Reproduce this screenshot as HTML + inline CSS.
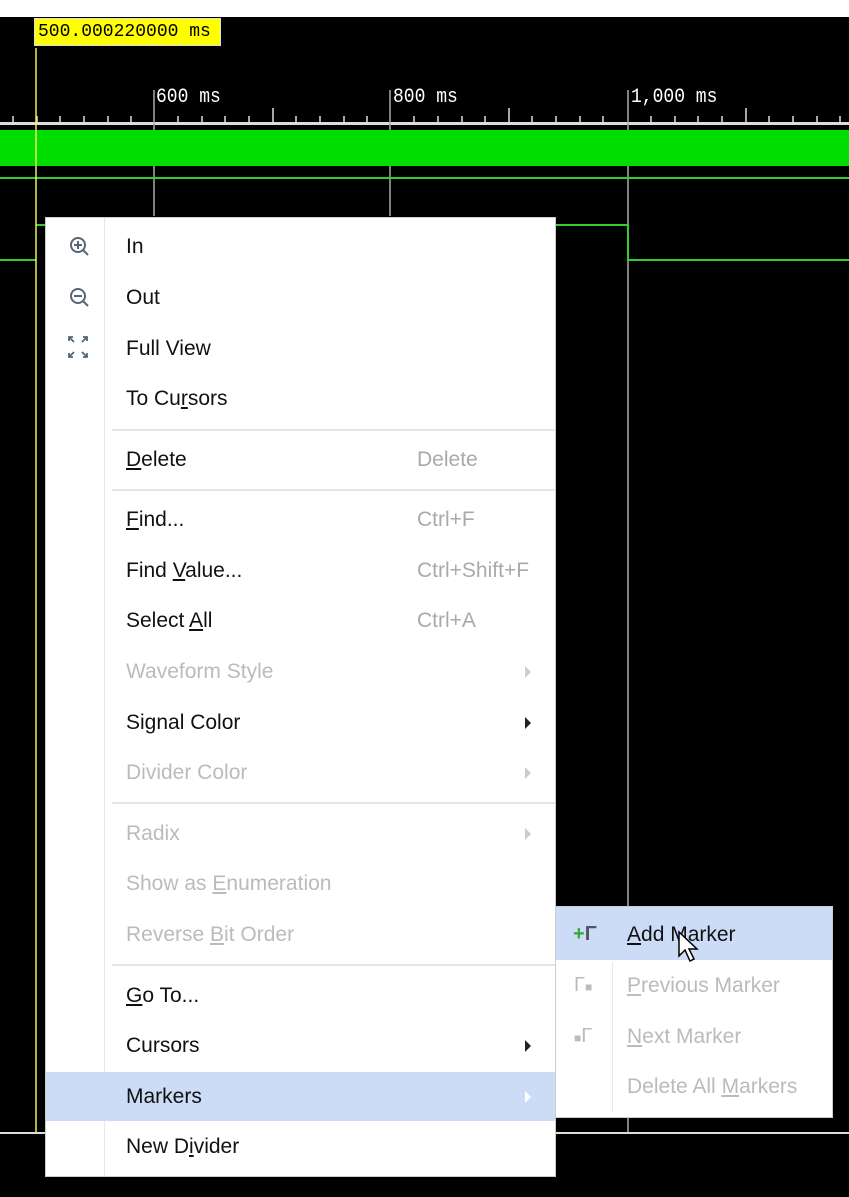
<!DOCTYPE html>
<html><head><style>
body{margin:0;width:849px;height:1197px;background:#000;position:relative;overflow:hidden;font-family:"Liberation Sans",Arial,sans-serif}
.a{position:absolute}
.it{position:absolute;left:126px;font-size:21px;color:#111;line-height:24px;white-space:nowrap}
.dis{color:#bbb}
.sc{position:absolute;left:417px;font-size:21px;color:#aaa;line-height:24px}
.arr{position:absolute;left:525px;width:0;height:0;border-left:6px solid #222;border-top:6px solid transparent;border-bottom:6px solid transparent}
.arr.d{border-left-color:#ccc}
.sep{position:absolute;left:112px;width:443px;height:2px;background:#e6e6e6}
u{text-decoration:underline;text-underline-offset:2px}
.mono{font-family:"Liberation Mono",monospace;color:#fff;font-size:18px;transform:scaleY(1.15);transform-origin:left top}
</style></head><body>
<div class="a" style="left:0;top:0;width:849px;height:17px;background:#fff"></div>
<div class="a" style="left:34px;top:18px;width:187px;height:28px;background:#ffff00;border:1px solid #ddd;box-sizing:border-box;font-family:'Liberation Mono',monospace;font-size:18px;line-height:26px;padding-left:3px;color:#000">500.000220000 ms</div>
<div class="a mono" style="left:156px;top:86px">600 ms</div>
<div class="a mono" style="left:393px;top:86px">800 ms</div>
<div class="a mono" style="left:631px;top:86px">1,000 ms</div>
<div class="a" style="left:0;top:122px;width:849px;height:3px;background:#ddd"></div>
<svg class="a" style="left:0;top:0" width="849" height="1197">
<g stroke="#ddd" stroke-width="1.5">
<path d="M13 116V123M37 116V123M60 116V123M84 116V123M108 116V123M131 116V123M178 116V123M202 116V123M225 116V123M249 116V123M273 108V123M296 116V123M320 116V123M344 116V123M367 116V123M414 116V123M438 116V123M462 116V123M485 116V123M509 108V123M532 116V123M556 116V123M580 116V123M603 116V123M651 116V123M675 116V123M698 116V123M722 116V123M746 108V123M769 116V123M793 116V123M817 116V123M840 116V123"/>
</g>
<g stroke="#aaa" stroke-width="1.5">
<path d="M154 90V216M390 90V216M628 90V1134"/>
</g>
<rect x="0" y="130" width="849" height="36" fill="#00dd00"/>
<path d="M0 178H849" stroke="#33cc33" stroke-width="2"/>
<path d="M0 260H36M36 225H628V260H849" stroke="#33cc33" stroke-width="2" fill="none"/>
<path d="M0 1133H849" stroke="#ddd" stroke-width="2"/>
<path d="M36 48V1134" stroke="#eeee66" stroke-width="1.5"/>
</svg>
<div class="a" style="left:45px;top:217px;width:511px;height:960px;background:#fff;border:1px solid #ccc;box-sizing:border-box"></div>
<div class="a" style="left:104px;top:218px;width:1px;height:958px;background:#e8e8e8"></div>
<div class="a" style="left:46px;top:1072px;width:509px;height:49px;background:#cddcf6"></div>
<svg class="a" style="left:66px;top:233px" width="28" height="130">
<g stroke="#556677" stroke-width="2" fill="none">
<circle cx="12" cy="12" r="7"/><path d="M17 17L22 22M12 8V16M8 12H16"/>
<circle cx="12" cy="63" r="7"/><path d="M17 68L22 73M8 63H16"/>
<path d="M3 108V104H7M21 108V104H17M3 120V124H7M21 120V124H17M3 104L8 109M21 104L16 109M3 124L8 119M21 124L16 119" stroke-width="1.8"/>
</g></svg>
<div class="it" style="top:235px">In</div>
<div class="it" style="top:286px">Out</div>
<div class="it" style="top:337px">Full View</div>
<div class="it" style="top:387px">To Cu<u>r</u>sors</div>
<div class="sep" style="top:429px"></div>
<div class="it" style="top:448px"><u>D</u>elete</div><div class="sc" style="top:448px">Delete</div>
<div class="sep" style="top:489px"></div>
<div class="it" style="top:508px"><u>F</u>ind...</div><div class="sc" style="top:508px">Ctrl+F</div>
<div class="it" style="top:559px">Find <u>V</u>alue...</div><div class="sc" style="top:559px">Ctrl+Shift+F</div>
<div class="it" style="top:609px">Select <u>A</u>ll</div><div class="sc" style="top:609px">Ctrl+A</div>
<div class="it dis" style="top:660px">Waveform Style</div><div class="arr d" style="top:666px"></div>
<div class="it" style="top:711px">Signal Color</div><div class="arr" style="top:717px"></div>
<div class="it dis" style="top:761px">Divider Color</div><div class="arr d" style="top:767px"></div>
<div class="sep" style="top:802px"></div>
<div class="it dis" style="top:822px">Radix</div><div class="arr d" style="top:828px"></div>
<div class="it dis" style="top:872px">Show as <u>E</u>numeration</div>
<div class="it dis" style="top:923px">Reverse <u>B</u>it Order</div>
<div class="sep" style="top:964px"></div>
<div class="it" style="top:984px"><u>G</u>o To...</div>
<div class="it" style="top:1034px">Cursors</div><div class="arr" style="top:1040px"></div>
<div class="it" style="top:1085px">Markers</div><div class="arr" style="top:1091px;border-left-color:#fff"></div>
<div class="it" style="top:1135px">New D<u>i</u>vider</div>
<div class="a" style="left:555px;top:906px;width:278px;height:212px;background:#fff;border:1px solid #ccc;box-sizing:border-box"></div>
<div class="a" style="left:556px;top:907px;width:276px;height:53px;background:#cddcf6"></div>
<div class="a" style="left:612px;top:962px;width:1px;height:150px;background:#e8e8e8"></div>
<div class="a" style="left:573px;top:922px;font-size:20px;font-weight:bold;color:#3a3;line-height:24px">+<span style="color:#556">Γ</span></div>
<div class="a" style="left:574px;top:973px;font-size:20px;color:#bbb;line-height:24px">Γ<span style="font-size:12px">■</span></div>
<div class="a" style="left:574px;top:1024px;font-size:20px;color:#bbb;line-height:24px"><span style="font-size:12px">■</span>Γ</div>
<div class="it" style="left:627px;top:923px"><u>A</u>dd Marker</div>
<div class="it dis" style="left:627px;top:974px"><u>P</u>revious Marker</div>
<div class="it dis" style="left:627px;top:1025px"><u>N</u>ext Marker</div>
<div class="it dis" style="left:627px;top:1075px">Delete All <u>M</u>arkers</div>
<svg class="a" style="left:677px;top:930px" width="24" height="36"><path d="M2 2V26L8 20L13 31L17 29L12 19H20Z" fill="#fff" stroke="#000" stroke-width="1.5"/></svg>
</body></html>
